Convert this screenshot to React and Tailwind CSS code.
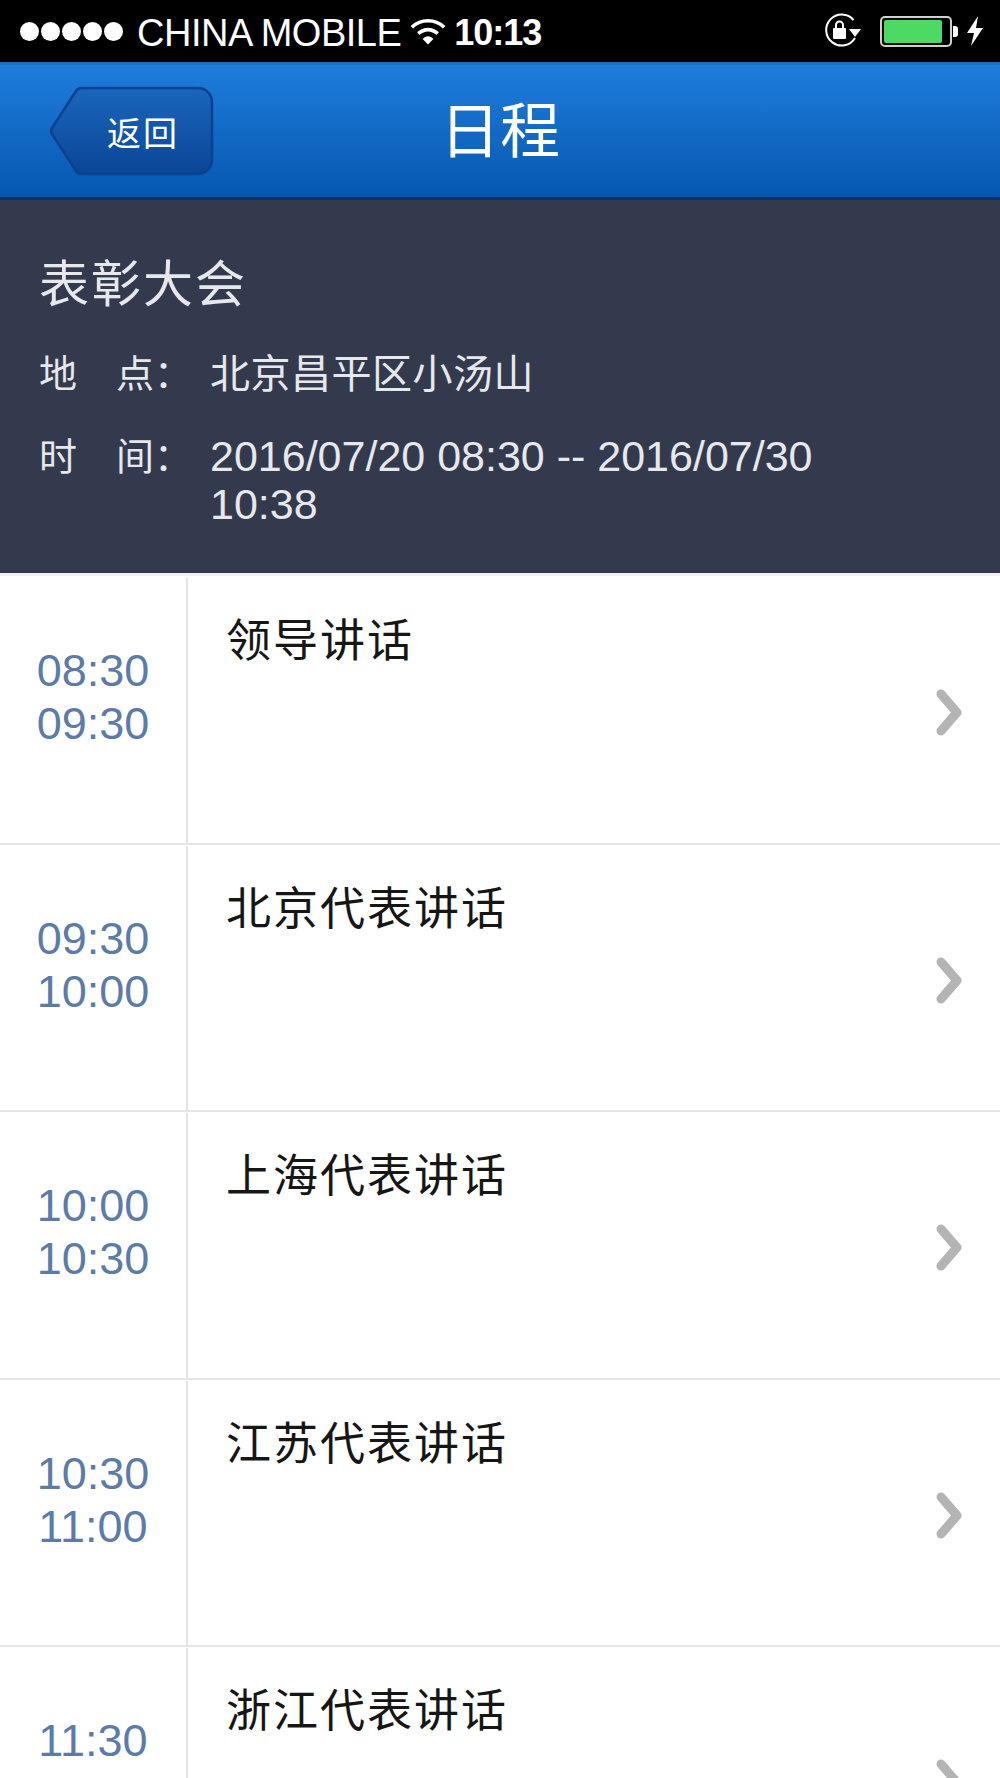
import React from 'react';

const cjk = "font-['Liberation_Sans','Noto_Sans_CJK_SC',sans-serif]";

const rows = [
  { start: '08:30', end: '09:30', title: '领导讲话' },
  { start: '09:30', end: '10:00', title: '北京代表讲话' },
  { start: '10:00', end: '10:30', title: '上海代表讲话' },
  { start: '10:30', end: '11:00', title: '江苏代表讲话' },
  { start: '11:30', title: '浙江代表讲话' },
];

function StatusBar() {
  return (
    <div className="h-[62px] shrink-0 bg-black flex items-center justify-between pl-[20px] pr-[16px] text-white">
      <div className="flex items-center">
        <div className="flex gap-[2px]">
          {[0, 1, 2, 3, 4].map((i) => (
            <div key={i} className="w-[19px] h-[19px] rounded-full bg-white" />
          ))}
        </div>
        <span className="ml-[14px] pt-[3px] text-[38px] leading-none tracking-[-0.5px]">CHINA MOBILE</span>
        <svg className="ml-[8px]" width="38" height="28" viewBox="0 0 34 26">
          <path d="M2 9.5C10.5 1.5 23.5 1.5 32 9.5" fill="none" stroke="#fff" strokeWidth="3.4" />
          <path d="M8 15.5C13.5 10.5 20.5 10.5 26 15.5" fill="none" stroke="#fff" strokeWidth="3.4" />
          <path d="M12 20.5C15 17 19 17 22 20.5L17 25.5Z" fill="#fff" />
        </svg>
        <span className="ml-[7px] pt-[3px] text-[36px] leading-none font-bold tracking-[-1px]">10:13</span>
      </div>
      <div className="flex items-center">
        <svg width="38" height="36" viewBox="0 0 38 36">
          <path d="M29.5 7A15.5 15.5 0 1 0 31 25" fill="none" stroke="#fff" strokeWidth="2" />
          <path d="M25 16H37L31 24Z" fill="#fff" />
          <rect x="9" y="15" width="13" height="11" rx="1" fill="#fff" />
          <path d="M12 15V12A3.5 3.5 0 0 1 19 12V15" fill="none" stroke="#fff" strokeWidth="2" />
        </svg>
        <div className="ml-[18px] w-[72px] h-[31px] rounded-[5px] border-2 border-[#d0d0d0] p-[2px]">
          <div className="w-[58px] h-full bg-[#4cd964] rounded-[2px]" />
        </div>
        <div className="ml-[1px] w-[5px] h-[11px] bg-white rounded-r-[3px]" />
        <svg className="ml-[8px]" width="18" height="30" viewBox="0 0 18 30">
          <path d="M12 0L1 17H8L5 30L17 12H10Z" fill="#fff" />
        </svg>
      </div>
    </div>
  );
}

function NavBar() {
  return (
    <div className="relative h-[138px] shrink-0 flex items-center justify-center border-t-[3px] border-[#1b6ec0] border-b-[3px] border-b-[#06326f] bg-gradient-to-b from-[#1f7ddc] to-[#0557ae]">
      <div className="absolute left-[50px] top-[21px]">
        <svg width="164" height="90" viewBox="0 0 164 90">
          <defs>
            <linearGradient id="backFill" x1="0" y1="0" x2="0" y2="1">
              <stop offset="0" stopColor="#1a66bd" />
              <stop offset="1" stopColor="#0b4595" />
            </linearGradient>
          </defs>
          <path
            d="M31 2H148A14 14 0 0 1 162 16V74A14 14 0 0 1 148 88H31A6 6 0 0 1 26 85L2 48A6 6 0 0 1 2 42L26 5A6 6 0 0 1 31 2Z"
            fill="url(#backFill)"
            stroke="#0a4191"
            strokeWidth="2.5"
          />
        </svg>
        <span className={`absolute left-[57px] top-[28px] text-[34px] leading-[40px] tracking-[2px] text-white whitespace-nowrap ${cjk}`}>返回</span>
      </div>
      <span className={`pt-[4px] text-[60px] leading-none text-white ${cjk}`}>日程</span>
    </div>
  );
}

function InfoPanel() {
  return (
    <div className={`h-[373px] shrink-0 bg-[#333a4d] pl-[39px] pr-[40px] pt-[55px] text-[#e6e8ec] ${cjk}`}>
      <div className="text-[50px] leading-[60px] tracking-[2px]">表彰大会</div>
      <div className="mt-[34px] flex text-[40px] leading-[50px]">
        <div className="w-[171px] shrink-0 flex text-[38px]">
          <span className="w-[77px]">地</span>
          <span>点：</span>
        </div>
        <span className="tracking-[0.5px]">北京昌平区小汤山</span>
      </div>
      <div className="mt-[33px] flex">
        <div className="w-[171px] shrink-0 flex text-[38px] leading-[50px]">
          <span className="w-[77px]">时</span>
          <span>间：</span>
        </div>
        <span className="w-[640px] text-[43px] leading-[48px]">2016/07/20 08:30 -- 2016/07/30 10:38</span>
      </div>
    </div>
  );
}

function Row({ start, end, title }) {
  return (
    <div className="h-[267.5px] shrink-0 flex border-b-2 border-[#e6e6e6]">
      <div className="w-[188px] shrink-0 mt-[1px] border-r-2 border-[#e4e4e4] pt-[66px]">
        <div className="text-[45px] leading-[53px] text-[#5c7ba8] text-center">{start}</div>
        {end && <div className="text-[45px] leading-[53px] text-[#5c7ba8] text-center">{end}</div>}
      </div>
      <div className={`flex-1 pl-[38px] pt-[37px] text-[45px] leading-[56px] text-[#161616] tracking-[2px] ${cjk}`}>{title}</div>
      <div className="w-[65px] shrink-0 pt-[111px]">
        <svg width="30" height="50" viewBox="0 0 30 50">
          <path d="M6 6L22 24.5L6 43" fill="none" stroke="#b4b4b4" strokeWidth="9" strokeLinecap="round" strokeLinejoin="round" />
        </svg>
      </div>
    </div>
  );
}

export default function App() {
  return (
    <div className={`w-[1000px] h-[1778px] overflow-hidden flex flex-col bg-white ${cjk}`}>
      <StatusBar />
      <NavBar />
      <InfoPanel />
      <div className="shrink-0 h-[3px] bg-[#eef0f2] mb-[1px]" />
      {rows.map((r) => (
        <Row key={r.title} {...r} />
      ))}
    </div>
  );
}
